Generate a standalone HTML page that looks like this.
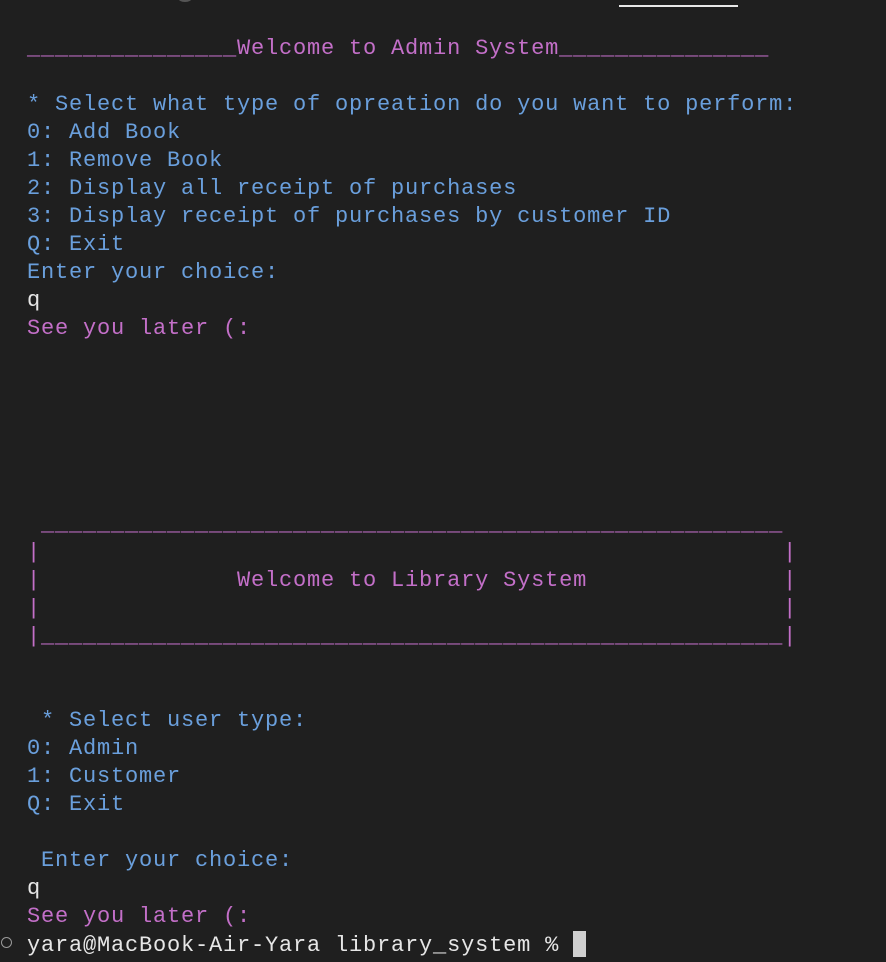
<!DOCTYPE html>
<html><head><meta charset="utf-8"><style>
html,body{margin:0;padding:0;background:#1f1f1f;width:886px;height:962px;overflow:hidden;position:relative}
pre{position:absolute;left:27px;top:35px;margin:0;font-family:"Liberation Mono",monospace;font-size:22px;letter-spacing:0.8px;line-height:28px;color:#d8d8d8;white-space:pre}
.p{color:#c36fc8}.b{color:#6a9fdc}.w{color:#e6e6e6}
.cur{display:inline-block;width:13px;height:26px;background:#cfcfcf;vertical-align:-6px}
</style></head><body>
<div style="position:absolute;left:619px;top:5px;width:119px;height:2px;background:#e8e8e8"></div>
<div style="position:absolute;left:178px;top:-6px;width:14px;height:8px;border-radius:50%;background:#555"></div>
<div style="position:absolute;left:1px;top:937px;width:9px;height:9px;border:1.5px solid #999;border-radius:50%"></div>
<pre><span class="p">_______________Welcome to Admin System_______________</span>

<span class="b">* Select what type of opreation do you want to perform:
0: Add Book
1: Remove Book
2: Display all receipt of purchases
3: Display receipt of purchases by customer ID
Q: Exit
Enter your choice:</span>
<span class="w">q</span>
<span class="p">See you later (:</span>






<span class="p"> _____________________________________________________
|                                                     |
|              Welcome to Library System              |
|                                                     |
|_____________________________________________________|</span>


<span class="b"> * Select user type:
0: Admin
1: Customer
Q: Exit

 Enter your choice:</span>
<span class="w">q</span>
<span class="p">See you later (:</span>
<span class="w">yara@MacBook-Air-Yara library_system % </span><span class="cur"></span></pre>
</body></html>
